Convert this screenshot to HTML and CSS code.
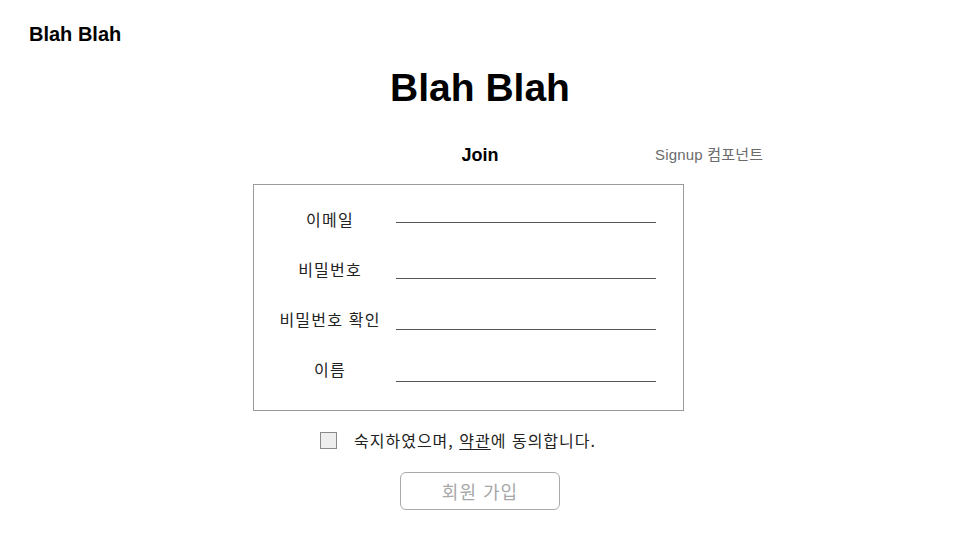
FILE: index.html
```html
<!DOCTYPE html>
<html lang="ko">
<head>
<meta charset="utf-8">
<title>Blah Blah</title>
<link rel="stylesheet" href="styles.css">
</head>
<body>
<header class="brand">Blah Blah</header>
<main class="main">
  <h1 class="title">Blah Blah</h1>
  <div class="join-row">
    <h2 class="join">Join</h2>
    <span class="note">Signup 컴포넌트</span>
  </div>
  <form class="card">
    <div class="field"><span class="label">이메일</span><span class="line line-1"></span></div>
    <div class="field"><span class="label">비밀번호</span><span class="line line-2"></span></div>
    <div class="field"><span class="label">비밀번호 확인</span><span class="line line-3"></span></div>
    <div class="field"><span class="label">이름</span><span class="line line-4"></span></div>
  </form>
  <div class="agree">
    <span class="checkbox"></span>
    <span class="agree-text">숙지하였으며, <u>약관</u>에 동의합니다.</span>
  </div>
  <div class="actions">
    <button class="submit" type="button">회원 가입</button>
  </div>
</main>
</body>
</html>
```
FILE: styles.css
```css
html, body {
  margin: 0;
  padding: 0;
  background: #ffffff;
}
body {
  width: 960px;
  height: 540px;
  overflow: hidden;
  font-family: "Liberation Sans", "Noto Sans CJK KR", sans-serif;
  color: #000;
}
.brand {
  padding: 22px 0 0 29px;
  font-size: 20px;
  line-height: 24px;
  font-weight: bold;
}
.main {
  display: flex;
  flex-direction: column;
}
.title {
  margin: 22px 0 0;
  text-align: center;
  font-size: 39px;
  line-height: 40px;
  font-weight: bold;
}
.join-row {
  position: relative;
  margin-top: 36px;
  height: 22px;
}
.join {
  margin: 0;
  text-align: center;
  font-size: 18px;
  line-height: 22px;
  font-weight: bold;
}
.note {
  position: absolute;
  left: 655px;
  top: 1px;
  font-size: 15px;
  line-height: 20px;
  color: #6b6b6b;
  letter-spacing: 0.2px;
}
.card {
  margin: 18px 0 0 253px;
  width: 429px;
  height: 216px;
  border: 1px solid #9a9a9a;
  padding: 9px 0 0;
  display: grid;
  grid-template-rows: repeat(4, 50px);
  align-content: start;
}
.field {
  display: flex;
  align-items: center;
}
.label {
  width: 132px;
  padding-left: 10px;
  text-align: center;
  font-family: "Noto Sans CJK KR", sans-serif;
  font-size: 16px;
  line-height: 20px;
  letter-spacing: 1.2px;
  color: #222;
}
.line {
  width: 260px;
  height: 1px;
  background: #555;
}
.line-1 { margin-top: 6px; }
.line-2 { margin-top: 18px; }
.line-3 { margin-top: 20px; }
.line-4 { margin-top: 24px; }
.agree {
  margin: 19px 0 0 320px;
  display: flex;
  align-items: center;
  gap: 17px;
  height: 20px;
}
.checkbox {
  width: 15px;
  height: 15px;
  border: 1px solid #8a8a8a;
  background: #eeeeee;
}
.agree-text {
  font-family: "Noto Sans CJK KR", sans-serif;
  font-size: 16px;
  line-height: 20px;
  letter-spacing: 1px;
  color: #222;
}
.agree-text u {
  text-underline-offset: 2px;
}
.actions {
  display: flex;
  justify-content: center;
  margin-top: 22px;
}
.submit {
  width: 160px;
  height: 38px;
  border: 1px solid #aaaaaa;
  border-radius: 6px;
  background: #fff;
  font-family: "Noto Sans CJK KR", sans-serif;
  font-size: 18px;
  letter-spacing: 1px;
  color: #a8a8a8;
  padding: 0;
}
```
